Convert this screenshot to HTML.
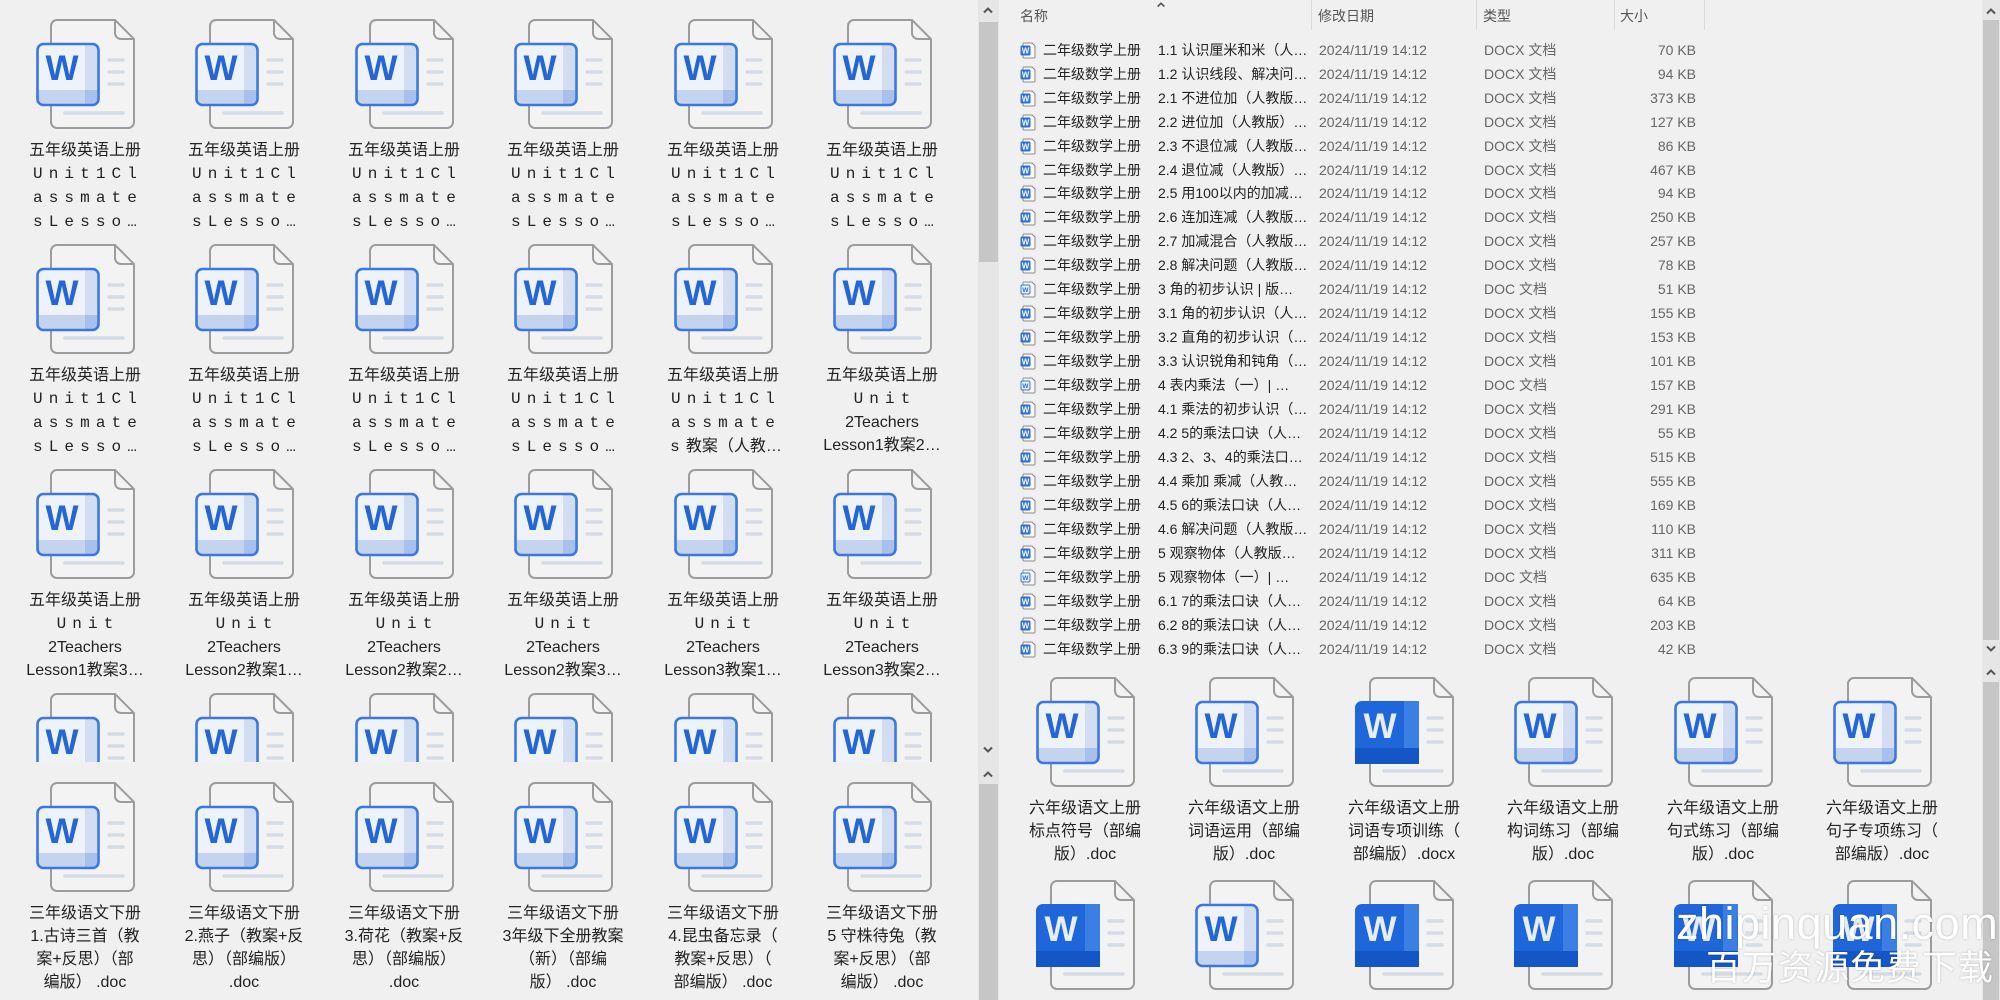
<!DOCTYPE html>
<html><head><meta charset="utf-8">
<style>
*{margin:0;padding:0;box-sizing:border-box}
body{width:2000px;height:1000px;overflow:hidden;background:#f0f0f0;position:relative;font-family:"Liberation Sans","Noto Sans CJK SC",sans-serif;color:#222}
.cell{position:absolute;width:160px}
.cell svg{position:absolute;left:31px;top:0;width:100px;height:110px}
.cell .t{position:absolute;left:0;top:120px;width:160px;text-align:center;font-size:16px;line-height:23px;white-space:nowrap;font-family:"Liberation Sans","Noto Sans CJK SC",sans-serif;color:#222}
.m{font-family:"Liberation Mono",monospace;letter-spacing:6.1px;padding-left:6px}
.clipL{position:absolute;left:0;top:0;width:978px;height:762px;overflow:hidden}
.sb{position:absolute;background:#e6e6e6}
.thumb{position:absolute;background:#c6c6c6}
.ar{position:absolute;width:12px;height:8px}
.hdr{position:absolute;top:6px;font-size:14px;color:#555;font-family:"Liberation Sans","Noto Sans CJK SC",sans-serif}
.sep{position:absolute;top:0;width:1px;height:30px;background:#dcdcdc}
.row{position:absolute;left:1020px;height:24px;width:700px;font-size:14px;line-height:24px;font-family:"Liberation Sans","Noto Sans CJK SC",sans-serif;white-space:nowrap}
.row svg{position:absolute;left:0;top:4px;width:16px;height:17px}
.row .a{position:absolute;left:23px;color:#222}
.row .b{position:absolute;left:138px;color:#222}
.row .c{position:absolute;left:299px;color:#666}
.row .d{position:absolute;left:464px;color:#666}
.row .e{position:absolute;left:576px;width:100px;text-align:right;color:#666}
.wm1{position:absolute;left:1676px;top:898px;font-size:45px;color:#fff;font-family:"Liberation Sans",sans-serif;letter-spacing:0.5px;text-shadow:0 0 2px rgba(0,0,0,.25)}
.wm2{position:absolute;left:1706px;top:946px;font-size:35px;color:#fff;font-family:"Liberation Sans","Noto Sans CJK SC",sans-serif;line-height:46px;letter-spacing:1px;text-shadow:0 0 2px rgba(0,0,0,.25)}
</style></head><body>
<svg width="0" height="0" style="position:absolute">
<defs>
<symbol id="up" viewBox="0 0 12 8"><path d="M2 6.5L6 2.5L10 6.5" fill="none" stroke="#555" stroke-width="2"/></symbol>
<symbol id="dn" viewBox="0 0 12 8"><path d="M2 1.5L6 5.5L10 1.5" fill="none" stroke="#555" stroke-width="2"/></symbol>
<symbol id="dl" viewBox="0 0 100 110">
<path d="M21 1H79L98 20V103a6 6 0 0 1-6 6H21a6 6 0 0 1-6-6V7a6 6 0 0 1 6-6z" fill="#f3f3f3" stroke="#9c9c9c" stroke-width="2"/>
<path d="M79 1V14a6 6 0 0 0 6 6H98" fill="none" stroke="#9c9c9c" stroke-width="2"/>
<g stroke="#d6dce6" stroke-width="3.5" stroke-linecap="round"><line x1="73" y1="41" x2="87" y2="41"/><line x1="73" y1="53" x2="87" y2="53"/><line x1="73" y1="65" x2="87" y2="65"/><line x1="29" y1="94" x2="87" y2="94"/></g>
<rect x="1.5" y="25" width="61" height="61" rx="6" fill="#eef2fa"/>
<rect x="49" y="26" width="12" height="59" fill="#d3ddf1"/>
<rect x="2.5" y="71" width="59" height="14" fill="#c4d4ef"/>
<rect x="49" y="71" width="12" height="14" fill="#a9c0ea"/>
<rect x="1.5" y="25" width="61" height="61" rx="6" fill="none" stroke="#3a78e0" stroke-width="2.6"/>
<text x="26" y="61" text-anchor="middle" font-family="Liberation Sans,sans-serif" font-weight="bold" font-size="35" fill="#2566d5">W</text>
</symbol>
<symbol id="ds" viewBox="0 0 100 110">
<path d="M21 1H79L98 20V103a6 6 0 0 1-6 6H21a6 6 0 0 1-6-6V7a6 6 0 0 1 6-6z" fill="#f3f3f3" stroke="#9c9c9c" stroke-width="2"/>
<path d="M79 1V14a6 6 0 0 0 6 6H98" fill="none" stroke="#9c9c9c" stroke-width="2"/>
<g stroke="#d6dce6" stroke-width="3.5" stroke-linecap="round"><line x1="73" y1="41" x2="87" y2="41"/><line x1="73" y1="53" x2="87" y2="53"/><line x1="73" y1="65" x2="87" y2="65"/><line x1="29" y1="94" x2="87" y2="94"/></g>
<rect x="0" y="24" width="64" height="63" rx="7" fill="#1f66da"/>
<rect x="49" y="24" width="15" height="63" fill="#3b7fe4"/>
<rect x="0" y="71" width="64" height="16" fill="#1556c6"/>
<text x="25" y="61" text-anchor="middle" font-family="Liberation Sans,sans-serif" font-weight="bold" font-size="35" fill="#e6eefc">W</text>
</symbol>
<symbol id="sm" viewBox="0 0 16 17">
<path d="M4 1H12L15 4V15a1 1 0 0 1-1 1H4a1 1 0 0 1-1-1V2a1 1 0 0 1 1-1z" fill="#f7f7f7" stroke="#8a8a8a" stroke-width="1"/>
<rect x="0.5" y="3.5" width="10" height="10" rx="1.5" fill="#2f6fd8"/>
<text x="5.5" y="11.5" text-anchor="middle" font-family="Liberation Sans,sans-serif" font-weight="bold" font-size="8" fill="#fff">W</text>
</symbol>
<symbol id="sm2" viewBox="0 0 16 17">
<path d="M4 1H12L15 4V15a1 1 0 0 1-1 1H4a1 1 0 0 1-1-1V2a1 1 0 0 1 1-1z" fill="#f7f7f7" stroke="#8a8a8a" stroke-width="1"/>
<rect x="1" y="4" width="9" height="9" rx="1.5" fill="#eaf0fb" stroke="#3a78e0" stroke-width="1"/>
<text x="5.5" y="11" text-anchor="middle" font-family="Liberation Sans,sans-serif" font-weight="bold" font-size="6.5" fill="#2f6fd8">W</text>
</symbol>
</defs></svg>

<div class="clipL">
<div class="cell" style="left:5px;top:19px"><svg><use href="#dl"/></svg><div class="t">五年级英语上册<br><span class="m">Unit1Cl</span><br><span class="m">assmate</span><br><span class="m">sLesso…</span></div></div>
<div class="cell" style="left:164px;top:19px"><svg><use href="#dl"/></svg><div class="t">五年级英语上册<br><span class="m">Unit1Cl</span><br><span class="m">assmate</span><br><span class="m">sLesso…</span></div></div>
<div class="cell" style="left:324px;top:19px"><svg><use href="#dl"/></svg><div class="t">五年级英语上册<br><span class="m">Unit1Cl</span><br><span class="m">assmate</span><br><span class="m">sLesso…</span></div></div>
<div class="cell" style="left:483px;top:19px"><svg><use href="#dl"/></svg><div class="t">五年级英语上册<br><span class="m">Unit1Cl</span><br><span class="m">assmate</span><br><span class="m">sLesso…</span></div></div>
<div class="cell" style="left:643px;top:19px"><svg><use href="#dl"/></svg><div class="t">五年级英语上册<br><span class="m">Unit1Cl</span><br><span class="m">assmate</span><br><span class="m">sLesso…</span></div></div>
<div class="cell" style="left:802px;top:19px"><svg><use href="#dl"/></svg><div class="t">五年级英语上册<br><span class="m">Unit1Cl</span><br><span class="m">assmate</span><br><span class="m">sLesso…</span></div></div>
<div class="cell" style="left:5px;top:244px"><svg><use href="#dl"/></svg><div class="t">五年级英语上册<br><span class="m">Unit1Cl</span><br><span class="m">assmate</span><br><span class="m">sLesso…</span></div></div>
<div class="cell" style="left:164px;top:244px"><svg><use href="#dl"/></svg><div class="t">五年级英语上册<br><span class="m">Unit1Cl</span><br><span class="m">assmate</span><br><span class="m">sLesso…</span></div></div>
<div class="cell" style="left:324px;top:244px"><svg><use href="#dl"/></svg><div class="t">五年级英语上册<br><span class="m">Unit1Cl</span><br><span class="m">assmate</span><br><span class="m">sLesso…</span></div></div>
<div class="cell" style="left:483px;top:244px"><svg><use href="#dl"/></svg><div class="t">五年级英语上册<br><span class="m">Unit1Cl</span><br><span class="m">assmate</span><br><span class="m">sLesso…</span></div></div>
<div class="cell" style="left:643px;top:244px"><svg><use href="#dl"/></svg><div class="t">五年级英语上册<br><span class="m">Unit1Cl</span><br><span class="m">assmate</span><br><span class="m">s</span>教案（人教…</div></div>
<div class="cell" style="left:802px;top:244px"><svg><use href="#dl"/></svg><div class="t">五年级英语上册<br><span class="m">Unit</span><br>2Teachers<br>Lesson1教案2…</div></div>
<div class="cell" style="left:5px;top:469px"><svg><use href="#dl"/></svg><div class="t">五年级英语上册<br><span class="m">Unit</span><br>2Teachers<br>Lesson1教案3…</div></div>
<div class="cell" style="left:164px;top:469px"><svg><use href="#dl"/></svg><div class="t">五年级英语上册<br><span class="m">Unit</span><br>2Teachers<br>Lesson2教案1…</div></div>
<div class="cell" style="left:324px;top:469px"><svg><use href="#dl"/></svg><div class="t">五年级英语上册<br><span class="m">Unit</span><br>2Teachers<br>Lesson2教案2…</div></div>
<div class="cell" style="left:483px;top:469px"><svg><use href="#dl"/></svg><div class="t">五年级英语上册<br><span class="m">Unit</span><br>2Teachers<br>Lesson2教案3…</div></div>
<div class="cell" style="left:643px;top:469px"><svg><use href="#dl"/></svg><div class="t">五年级英语上册<br><span class="m">Unit</span><br>2Teachers<br>Lesson3教案1…</div></div>
<div class="cell" style="left:802px;top:469px"><svg><use href="#dl"/></svg><div class="t">五年级英语上册<br><span class="m">Unit</span><br>2Teachers<br>Lesson3教案2…</div></div>
<div class="cell" style="left:5px;top:693px"><svg><use href="#dl"/></svg></div>
<div class="cell" style="left:164px;top:693px"><svg><use href="#dl"/></svg></div>
<div class="cell" style="left:324px;top:693px"><svg><use href="#dl"/></svg></div>
<div class="cell" style="left:483px;top:693px"><svg><use href="#dl"/></svg></div>
<div class="cell" style="left:643px;top:693px"><svg><use href="#dl"/></svg></div>
<div class="cell" style="left:802px;top:693px"><svg><use href="#dl"/></svg></div>
</div>
<div class="cell" style="left:5px;top:782px"><svg><use href="#dl"/></svg><div class="t">三年级语文下册<br>1.古诗三首（教<br>案+反思）（部<br>编版） .doc</div></div>
<div class="cell" style="left:164px;top:782px"><svg><use href="#dl"/></svg><div class="t">三年级语文下册<br>2.燕子（教案+反<br>思）（部编版）<br>.doc</div></div>
<div class="cell" style="left:324px;top:782px"><svg><use href="#dl"/></svg><div class="t">三年级语文下册<br>3.荷花（教案+反<br>思）（部编版）<br>.doc</div></div>
<div class="cell" style="left:483px;top:782px"><svg><use href="#dl"/></svg><div class="t">三年级语文下册<br>3年级下全册教案<br>（新）（部编<br>版） .doc</div></div>
<div class="cell" style="left:643px;top:782px"><svg><use href="#dl"/></svg><div class="t">三年级语文下册<br>4.昆虫备忘录（<br>教案+反思）（<br>部编版） .doc</div></div>
<div class="cell" style="left:802px;top:782px"><svg><use href="#dl"/></svg><div class="t">三年级语文下册<br>5 守株待兔（教<br>案+反思）（部<br>编版） .doc</div></div>

<div class="sb" style="left:978px;top:0;width:21px;height:1000px"></div>
<div class="thumb" style="left:979px;top:22px;width:19px;height:240px"></div>
<svg class="ar" style="left:982px;top:6px"><use href="#up"/></svg>
<svg class="ar" style="left:982px;top:746px"><use href="#dn"/></svg>
<svg class="ar" style="left:982px;top:770px"><use href="#up"/></svg>
<div class="thumb" style="left:979px;top:784px;width:19px;height:216px"></div>

<div class="hdr" style="left:1020px">名称</div>
<svg class="ar" style="left:1156px;top:1px;width:10px;height:7px"><use href="#up"/></svg>
<div class="sep" style="left:1311px"></div>
<div class="hdr" style="left:1318px">修改日期</div>
<div class="sep" style="left:1476px"></div>
<div class="hdr" style="left:1483px">类型</div>
<div class="sep" style="left:1614px"></div>
<div class="hdr" style="left:1620px">大小</div>
<div class="sep" style="left:1704px"></div>

<div class="row" style="top:38px"><svg><use href="#sm"/></svg><span class="a">二年级数学上册</span><span class="b">1.1 认识厘米和米（人…</span><span class="c">2024/11/19 14:12</span><span class="d">DOCX 文档</span><span class="e">70 KB</span></div>
<div class="row" style="top:62px"><svg><use href="#sm"/></svg><span class="a">二年级数学上册</span><span class="b">1.2 认识线段、解决问…</span><span class="c">2024/11/19 14:12</span><span class="d">DOCX 文档</span><span class="e">94 KB</span></div>
<div class="row" style="top:86px"><svg><use href="#sm"/></svg><span class="a">二年级数学上册</span><span class="b">2.1 不进位加（人教版…</span><span class="c">2024/11/19 14:12</span><span class="d">DOCX 文档</span><span class="e">373 KB</span></div>
<div class="row" style="top:110px"><svg><use href="#sm"/></svg><span class="a">二年级数学上册</span><span class="b">2.2 进位加（人教版）…</span><span class="c">2024/11/19 14:12</span><span class="d">DOCX 文档</span><span class="e">127 KB</span></div>
<div class="row" style="top:134px"><svg><use href="#sm"/></svg><span class="a">二年级数学上册</span><span class="b">2.3 不退位减（人教版…</span><span class="c">2024/11/19 14:12</span><span class="d">DOCX 文档</span><span class="e">86 KB</span></div>
<div class="row" style="top:158px"><svg><use href="#sm"/></svg><span class="a">二年级数学上册</span><span class="b">2.4 退位减（人教版）…</span><span class="c">2024/11/19 14:12</span><span class="d">DOCX 文档</span><span class="e">467 KB</span></div>
<div class="row" style="top:181px"><svg><use href="#sm"/></svg><span class="a">二年级数学上册</span><span class="b">2.5 用100以内的加减…</span><span class="c">2024/11/19 14:12</span><span class="d">DOCX 文档</span><span class="e">94 KB</span></div>
<div class="row" style="top:205px"><svg><use href="#sm"/></svg><span class="a">二年级数学上册</span><span class="b">2.6 连加连减（人教版…</span><span class="c">2024/11/19 14:12</span><span class="d">DOCX 文档</span><span class="e">250 KB</span></div>
<div class="row" style="top:229px"><svg><use href="#sm"/></svg><span class="a">二年级数学上册</span><span class="b">2.7 加减混合（人教版…</span><span class="c">2024/11/19 14:12</span><span class="d">DOCX 文档</span><span class="e">257 KB</span></div>
<div class="row" style="top:253px"><svg><use href="#sm"/></svg><span class="a">二年级数学上册</span><span class="b">2.8 解决问题（人教版…</span><span class="c">2024/11/19 14:12</span><span class="d">DOCX 文档</span><span class="e">78 KB</span></div>
<div class="row" style="top:277px"><svg><use href="#sm2"/></svg><span class="a">二年级数学上册</span><span class="b">3 角的初步认识 | 版…</span><span class="c">2024/11/19 14:12</span><span class="d">DOC 文档</span><span class="e">51 KB</span></div>
<div class="row" style="top:301px"><svg><use href="#sm"/></svg><span class="a">二年级数学上册</span><span class="b">3.1 角的初步认识（人…</span><span class="c">2024/11/19 14:12</span><span class="d">DOCX 文档</span><span class="e">155 KB</span></div>
<div class="row" style="top:325px"><svg><use href="#sm"/></svg><span class="a">二年级数学上册</span><span class="b">3.2 直角的初步认识（…</span><span class="c">2024/11/19 14:12</span><span class="d">DOCX 文档</span><span class="e">153 KB</span></div>
<div class="row" style="top:349px"><svg><use href="#sm"/></svg><span class="a">二年级数学上册</span><span class="b">3.3 认识锐角和钝角（…</span><span class="c">2024/11/19 14:12</span><span class="d">DOCX 文档</span><span class="e">101 KB</span></div>
<div class="row" style="top:373px"><svg><use href="#sm2"/></svg><span class="a">二年级数学上册</span><span class="b">4 表内乘法（一）| …</span><span class="c">2024/11/19 14:12</span><span class="d">DOC 文档</span><span class="e">157 KB</span></div>
<div class="row" style="top:397px"><svg><use href="#sm"/></svg><span class="a">二年级数学上册</span><span class="b">4.1 乘法的初步认识（…</span><span class="c">2024/11/19 14:12</span><span class="d">DOCX 文档</span><span class="e">291 KB</span></div>
<div class="row" style="top:421px"><svg><use href="#sm"/></svg><span class="a">二年级数学上册</span><span class="b">4.2 5的乘法口诀（人…</span><span class="c">2024/11/19 14:12</span><span class="d">DOCX 文档</span><span class="e">55 KB</span></div>
<div class="row" style="top:445px"><svg><use href="#sm"/></svg><span class="a">二年级数学上册</span><span class="b">4.3 2、3、4的乘法口…</span><span class="c">2024/11/19 14:12</span><span class="d">DOCX 文档</span><span class="e">515 KB</span></div>
<div class="row" style="top:469px"><svg><use href="#sm"/></svg><span class="a">二年级数学上册</span><span class="b">4.4 乘加 乘减（人教…</span><span class="c">2024/11/19 14:12</span><span class="d">DOCX 文档</span><span class="e">555 KB</span></div>
<div class="row" style="top:493px"><svg><use href="#sm"/></svg><span class="a">二年级数学上册</span><span class="b">4.5 6的乘法口诀（人…</span><span class="c">2024/11/19 14:12</span><span class="d">DOCX 文档</span><span class="e">169 KB</span></div>
<div class="row" style="top:517px"><svg><use href="#sm"/></svg><span class="a">二年级数学上册</span><span class="b">4.6 解决问题（人教版…</span><span class="c">2024/11/19 14:12</span><span class="d">DOCX 文档</span><span class="e">110 KB</span></div>
<div class="row" style="top:541px"><svg><use href="#sm"/></svg><span class="a">二年级数学上册</span><span class="b">5 观察物体（人教版…</span><span class="c">2024/11/19 14:12</span><span class="d">DOCX 文档</span><span class="e">311 KB</span></div>
<div class="row" style="top:565px"><svg><use href="#sm2"/></svg><span class="a">二年级数学上册</span><span class="b">5 观察物体（一）| …</span><span class="c">2024/11/19 14:12</span><span class="d">DOC 文档</span><span class="e">635 KB</span></div>
<div class="row" style="top:589px"><svg><use href="#sm"/></svg><span class="a">二年级数学上册</span><span class="b">6.1 7的乘法口诀（人…</span><span class="c">2024/11/19 14:12</span><span class="d">DOCX 文档</span><span class="e">64 KB</span></div>
<div class="row" style="top:613px"><svg><use href="#sm"/></svg><span class="a">二年级数学上册</span><span class="b">6.2 8的乘法口诀（人…</span><span class="c">2024/11/19 14:12</span><span class="d">DOCX 文档</span><span class="e">203 KB</span></div>
<div class="row" style="top:637px"><svg><use href="#sm"/></svg><span class="a">二年级数学上册</span><span class="b">6.3 9的乘法口诀（人…</span><span class="c">2024/11/19 14:12</span><span class="d">DOCX 文档</span><span class="e">42 KB</span></div>

<div class="sb" style="left:1982px;top:0;width:18px;height:1000px"></div>
<svg class="ar" style="left:1985px;top:7px"><use href="#up"/></svg>
<div class="thumb" style="left:1983px;top:20px;width:16px;height:620px"></div>
<svg class="ar" style="left:1985px;top:645px"><use href="#dn"/></svg>
<svg class="ar" style="left:1985px;top:668px"><use href="#up"/></svg>
<div class="thumb" style="left:1983px;top:682px;width:16px;height:318px"></div>

<div class="cell" style="left:1005px;top:677px"><svg><use href="#dl"/></svg><div class="t">六年级语文上册<br>标点符号（部编<br>版）.doc</div></div>
<div class="cell" style="left:1164px;top:677px"><svg><use href="#dl"/></svg><div class="t">六年级语文上册<br>词语运用（部编<br>版）.doc</div></div>
<div class="cell" style="left:1324px;top:677px"><svg><use href="#ds"/></svg><div class="t">六年级语文上册<br>词语专项训练（<br>部编版）.docx</div></div>
<div class="cell" style="left:1483px;top:677px"><svg><use href="#dl"/></svg><div class="t">六年级语文上册<br>构词练习（部编<br>版）.doc</div></div>
<div class="cell" style="left:1643px;top:677px"><svg><use href="#dl"/></svg><div class="t">六年级语文上册<br>句式练习（部编<br>版）.doc</div></div>
<div class="cell" style="left:1802px;top:677px"><svg><use href="#dl"/></svg><div class="t">六年级语文上册<br>句子专项练习（<br>部编版）.doc</div></div>
<div class="cell" style="left:1005px;top:880px"><svg><use href="#ds"/></svg></div>
<div class="cell" style="left:1164px;top:880px"><svg><use href="#dl"/></svg></div>
<div class="cell" style="left:1324px;top:880px"><svg><use href="#ds"/></svg></div>
<div class="cell" style="left:1483px;top:880px"><svg><use href="#ds"/></svg></div>
<div class="cell" style="left:1643px;top:880px"><svg><use href="#ds"/></svg></div>
<div class="cell" style="left:1802px;top:880px"><svg><use href="#ds"/></svg></div>

<div class="wm1">zhipinquan.com</div>
<div class="wm2">百万资源免费下载</div>
</body></html>
